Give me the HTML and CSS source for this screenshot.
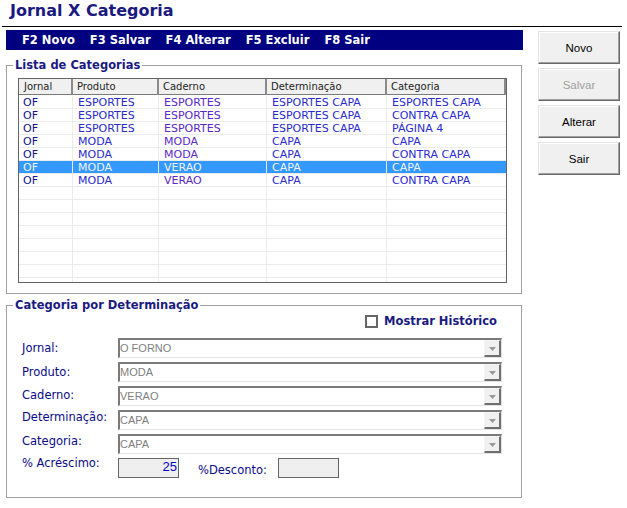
FILE: index.html
```html
<!DOCTYPE html>
<html lang="pt">
<head>
<meta charset="utf-8">
<title>Jornal X Categoria</title>
<link rel="stylesheet" href="styles.css">
</head>
<body>
<div class="window">
  <h1 class="title">Jornal X Categoria</h1>
  <div class="main">
    <div class="content">
      <nav class="toolbar">
        <span>F2 Novo</span>
        <span>F3 Salvar</span>
        <span>F4 Alterar</span>
        <span>F5 Excluir</span>
        <span>F8 Sair</span>
      </nav>

      <fieldset class="group group-list">
        <legend>Lista de Categorias</legend>
        <div class="grid">
          <table>
            <colgroup>
              <col class="c1"><col class="c2"><col class="c3"><col class="c4"><col class="c5">
            </colgroup>
            <thead>
              <tr><th>Jornal</th><th>Produto</th><th>Caderno</th><th>Determinação</th><th>Categoria</th></tr>
            </thead>
            <tbody>
              <tr><td>OF</td><td>ESPORTES</td><td>ESPORTES</td><td>ESPORTES CAPA</td><td>ESPORTES CAPA</td></tr>
              <tr><td>OF</td><td>ESPORTES</td><td>ESPORTES</td><td>ESPORTES CAPA</td><td>CONTRA CAPA</td></tr>
              <tr><td>OF</td><td>ESPORTES</td><td>ESPORTES</td><td>ESPORTES CAPA</td><td>PÁGINA 4</td></tr>
              <tr><td>OF</td><td>MODA</td><td>MODA</td><td>CAPA</td><td>CAPA</td></tr>
              <tr><td>OF</td><td>MODA</td><td>MODA</td><td>CAPA</td><td>CONTRA CAPA</td></tr>
              <tr class="selected"><td>OF</td><td>MODA</td><td>VERAO</td><td>CAPA</td><td>CAPA</td></tr>
              <tr><td>OF</td><td>MODA</td><td>VERAO</td><td>CAPA</td><td>CONTRA CAPA</td></tr>
              <tr><td>&nbsp;</td><td></td><td></td><td></td><td></td></tr>
              <tr><td>&nbsp;</td><td></td><td></td><td></td><td></td></tr>
              <tr><td>&nbsp;</td><td></td><td></td><td></td><td></td></tr>
              <tr><td>&nbsp;</td><td></td><td></td><td></td><td></td></tr>
              <tr><td>&nbsp;</td><td></td><td></td><td></td><td></td></tr>
              <tr><td>&nbsp;</td><td></td><td></td><td></td><td></td></tr>
              <tr><td>&nbsp;</td><td></td><td></td><td></td><td></td></tr>
              <tr><td>&nbsp;</td><td></td><td></td><td></td><td></td></tr>
            </tbody>
          </table>
        </div>
      </fieldset>

      <fieldset class="group group-form">
        <legend>Categoria por Determinação</legend>
        <div class="history">
          <span class="check"></span>
          <span class="history-label">Mostrar Histórico</span>
        </div>
        <div class="form">
          <label class="lbl">Jornal:</label>
          <div class="combo"><span class="combo-text">O FORNO</span><span class="combo-btn"><svg width="7" height="4" viewBox="0 0 7 4"><polygon points="0,0 7,0 3.5,4" fill="#9a9a9a"/></svg></span></div>

          <label class="lbl">Produto:</label>
          <div class="combo"><span class="combo-text">MODA</span><span class="combo-btn"><svg width="7" height="4" viewBox="0 0 7 4"><polygon points="0,0 7,0 3.5,4" fill="#9a9a9a"/></svg></span></div>

          <label class="lbl up1">Caderno:</label>
          <div class="combo"><span class="combo-text">VERAO</span><span class="combo-btn"><svg width="7" height="4" viewBox="0 0 7 4"><polygon points="0,0 7,0 3.5,4" fill="#9a9a9a"/></svg></span></div>

          <label class="lbl up3">Determinação:</label>
          <div class="combo"><span class="combo-text">CAPA</span><span class="combo-btn"><svg width="7" height="4" viewBox="0 0 7 4"><polygon points="0,0 7,0 3.5,4" fill="#9a9a9a"/></svg></span></div>

          <label class="lbl up3">Categoria:</label>
          <div class="combo"><span class="combo-text">CAPA</span><span class="combo-btn"><svg width="7" height="4" viewBox="0 0 7 4"><polygon points="0,0 7,0 3.5,4" fill="#9a9a9a"/></svg></span></div>

          <label class="lbl up5">% Acréscimo:</label>
          <div class="pct">
            <div class="num">25</div>
            <label class="lbl lbl-desc">%Desconto:</label>
            <div class="num"></div>
          </div>
        </div>
      </fieldset>
    </div>

    <div class="actions">
      <button class="btn">Novo</button>
      <button class="btn" disabled>Salvar</button>
      <button class="btn">Alterar</button>
      <button class="btn">Sair</button>
    </div>
  </div>
</div>
</body>
</html>
```
FILE: styles.css
```css
* { box-sizing: border-box; }

body {
  margin: 0;
  background: #ffffff;
  font-family: "DejaVu Sans", Verdana, sans-serif;
}

.window { width: 627px; }

.title {
  margin: 0 5px 0 2px;
  padding: 1px 0 5px 8px;
  font-size: 16px;
  line-height: 20px;
  font-weight: bold;
  color: #1a1a80;
  border-bottom: 1px solid #000000;
}

.main {
  display: flex;
  align-items: flex-start;
  padding-left: 6px;
}

.content {
  width: 517px;
  padding-top: 3px;
}

.toolbar {
  height: 20px;
  background: #000080;
  display: flex;
  gap: 15px;
  padding-left: 16px;
  color: #ffffff;
  font-weight: bold;
  font-size: 11.5px;
  line-height: 20px;
}

.group {
  margin: 9px 0 0;
  padding: 0 0 10px;
  border: 1px solid #a0a0a0;
  width: 516px;
  min-width: 0;
}

.group legend {
  margin-left: 6px;
  padding: 0 2px;
  font-size: 11.5px;
  font-weight: bold;
  line-height: 13px;
  color: #1a1a80;
}

.group-form {
  margin-top: 5px;
  padding-bottom: 19px;
}

/* list grid */
.grid {
  margin: 6px 0 0 11px;
  width: 489px;
  height: 205px;
  border: 1px solid #646464;
  overflow: hidden;
  background: #ffffff;
}

.grid table {
  width: 487px;
  border-collapse: separate;
  border-spacing: 0;
  table-layout: fixed;
}

.c1 { width: 54px; }
.c2 { width: 86px; }
.c3 { width: 108px; }
.c4 { width: 120px; }
.c5 { width: 119px; }

.grid th {
  background: #f0f0f0;
  font-weight: normal;
  text-align: left;
  font-size: 10px;
  line-height: 15px;
  color: #1e1e1e;
  padding: 0 0 0 4px;
  border-right: 2px solid #8a8a8a;
  border-bottom: 1px solid #7a7a7a;
  white-space: nowrap;
  overflow: hidden;
}
.grid th:first-child { padding-left: 5px; }

.grid td {
  font-size: 11px;
  line-height: 10px;
  padding: 2px 0 0 5px;
  border-right: 1px solid #ebebeb;
  border-bottom: 1px solid #ebebeb;
  white-space: nowrap;
  color: #2a2ad0;
}
.grid td:last-child { border-right: none; }
.grid td:first-child { padding-left: 4px; color: #12128f; }
.grid td:nth-child(2) { color: #2a2ac8; }
.grid td:nth-child(3) { color: #5a28c8; }

.grid tbody tr:first-child td { border-top: 1px solid #ffffff; }

.grid tr.selected td {
  background: #3399ff;
  color: #f2f2ff;
}

/* form */
.history {
  display: flex;
  justify-content: flex-end;
  align-items: center;
  gap: 6px;
  margin-top: 3px;
  padding-right: 24px;
  height: 13px;
}

.check {
  width: 13px;
  height: 13px;
  border: 2px solid #666666;
  background: #ffffff;
}

.history-label {
  font-size: 11.5px;
  font-weight: bold;
  color: #1a1a80;
  line-height: 13px;
}

.form {
  display: grid;
  grid-template-columns: 96px 384px;
  grid-auto-rows: 20px;
  row-gap: 4px;
  align-items: center;
  margin: 10px 0 0 15px;
}

.lbl {
  font-size: 11.5px;
  line-height: 14px;
  color: #0a0a88;
  white-space: nowrap;
}
.up1 { margin-bottom: 2px; }
.up3 { margin-bottom: 6px; }
.up5 { margin-bottom: 10px; }

.combo {
  height: 20px;
  display: flex;
  border-style: solid;
  border-width: 2px 1px 1px 2px;
  border-color: #7a7a7a #e3e3e3 #e3e3e3 #7a7a7a;
  background: #ffffff;
}

.combo-text {
  flex: 1;
  padding-left: 0;
  font-family: "Liberation Sans", Arial, sans-serif;
  font-size: 11px;
  line-height: 16px;
  color: #7f7f7f;
}

.combo-btn {
  width: 17px;
  height: 17px;
  display: flex;
  align-items: center;
  justify-content: center;
  padding-top: 1px;
  background: #f0f0f0;
  border-style: solid;
  border-width: 1px 2px 2px 1px;
  border-color: #f4f4f4 #6f6f6f #6f6f6f #f4f4f4;
}

.pct {
  display: flex;
  align-items: center;
  height: 20px;
}

.num {
  width: 61px;
  height: 20px;
  border: 1px solid #646464;
  background: #efefef;
  text-align: right;
  padding-right: 1px;
  font-family: "Liberation Sans", Arial, sans-serif;
  font-size: 13px;
  line-height: 16px;
  color: #0000c8;
}

.lbl-desc {
  width: 80px;
  margin-left: 19px;
  padding-top: 4px;
}

/* action buttons */
.actions {
  display: flex;
  flex-direction: column;
  gap: 4px;
  margin: 4px 0 0 15px;
}

.btn {
  width: 82px;
  height: 33px;
  padding: 0;
  background: #f0f0f0;
  border: 1px solid;
  border-color: #e3e3e3 #696969 #696969 #e3e3e3;
  box-shadow: inset -1px -1px 0 #a0a0a0, inset 1px 1px 0 #ffffff;
  font-family: "Liberation Sans", Arial, sans-serif;
  font-size: 11.5px;
  color: #000000;
}

.btn:disabled { color: #a0a0a0; }
```
